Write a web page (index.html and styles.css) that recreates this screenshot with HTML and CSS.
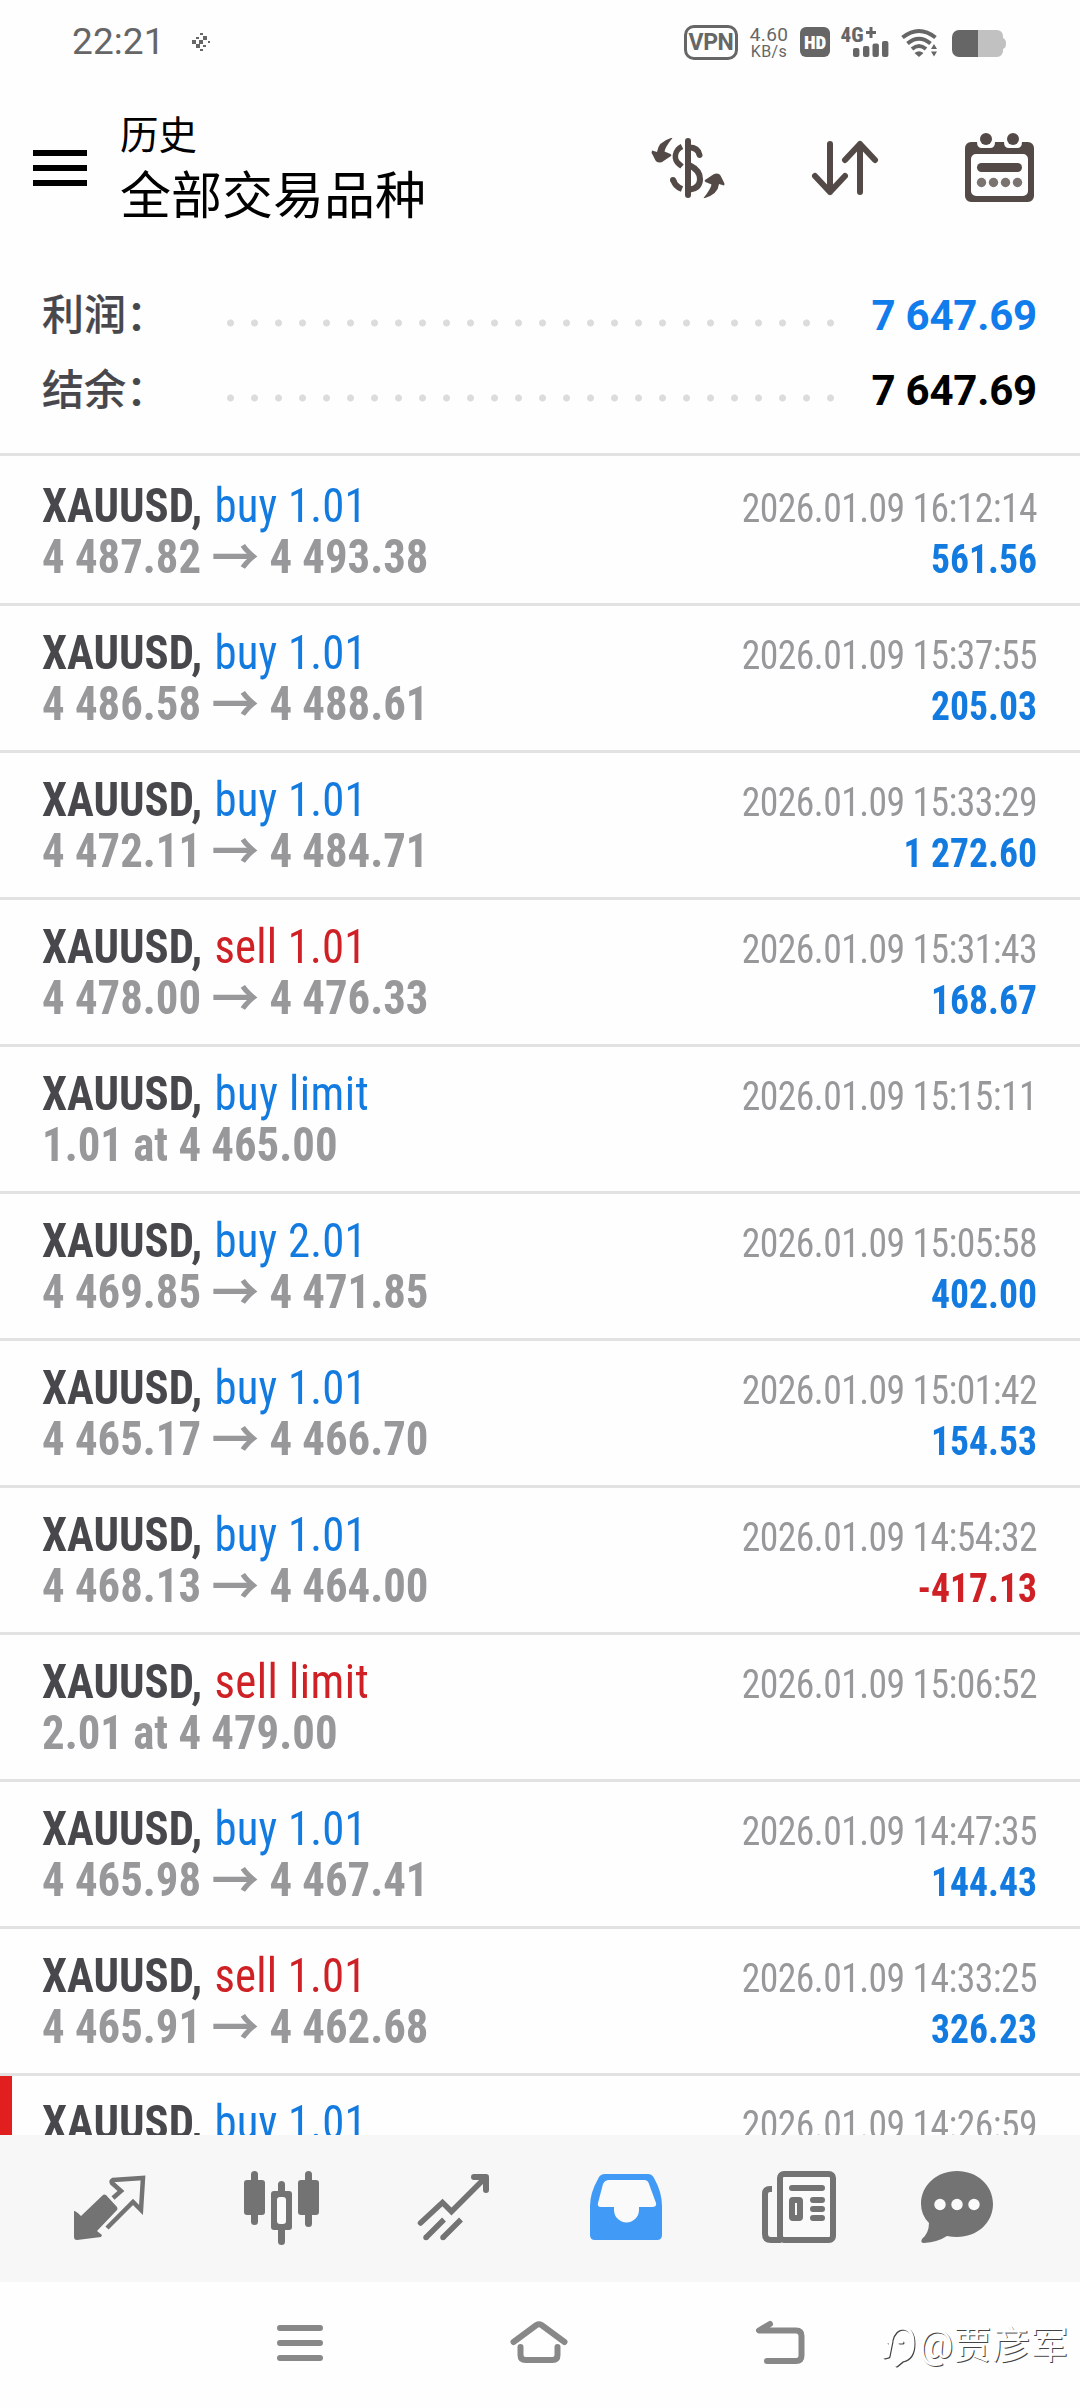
FILE: index.html
```html
<!DOCTYPE html>
<html lang="zh-CN">
<head>
<meta charset="utf-8">
<title>历史</title>
<link rel="stylesheet" href="styles.css">
</head>
<body>
<div class="screen">
  <div class="status">
    <span class="clock">22:21</span>
    <svg class="pix" width="18" height="18" viewBox="0 0 18 18"><path d="M8 0h3v2h-3zM4 4h3v2h-3zM11 3h4v4h-4zM0 7h4v4h-4zM7 7h4v4h-4zM4 11h4v4h-4zM11 12h3v2h-3zM16 8h2v2h-2zM8 16h3v2h-3z"/></svg>
    <span class="vpn">VPN</span>
    <span class="speed"><b>4.60</b><i>KB/s</i></span>
    <span class="hd">HD</span>
    <svg class="signal" width="50" height="36" viewBox="842 24 50 36"><text x="842.5" y="42" class="net">4G</text><path d="M868 31h3.500v-4h3v4h3.500v3h-3.500v4h-3v-4h-3.500z"/><rect x="855" y="48" width="6.400" height="9" rx="2"/><rect x="865" y="46" width="6.400" height="11" rx="2"/><rect x="874.500" y="43.500" width="6.400" height="13.500" rx="2"/><rect x="884" y="41" width="6.400" height="16" rx="2"/></svg>
    <svg class="wifi" width="38" height="30" viewBox="902 28 38 30"><g fill="none" stroke="#666" stroke-width="4"><path d="M904.500 37.500q16.500-13 33 0"/><path d="M909.500 43.500q11.500-9.500 23 0"/><path d="M914 49q7-6 14 0"/></g><path d="M916.500 53q4.500-3.500 9 0l-4.500 4zM933 49l3-5 3 5zM933 51.500h6l-3 5z"/></svg>
    <svg class="battery" width="54" height="28" viewBox="954 30 54 28"><path d="M980 30h19a6 6 0 0 1 6 6v2q3 1 3 5.500t-3 5.500v2a6 6 0 0 1-6 6h-19z" fill="#c1c1c1"/><path d="M980 30h-19a7 7 0 0 0-7 7v13a7 7 0 0 0 7 7h19z"/></svg>
  </div>

  <header class="header">
    <svg class="menu" width="54" height="36" viewBox="0 0 54 36"><path d="M0 0h54v6H0zM0 15h54v6H0zM0 30h54v6H0z"/></svg>
    <div class="titles"><div class="title">历史</div><div class="subtitle">全部交易品种</div></div>
    <svg class="act" width="74" height="66" viewBox="653 135 74 66" fill="none" stroke="#534a47" stroke-width="6" stroke-linecap="round">
      <path d="M690 141v54"/><path d="M684 146.500c-8 4-8.500 13-3 17.500l3 2.500" stroke-width="5.500" stroke-linecap="butt"/><path d="M691 147.500q9 0 10.500 7.500"/><path d="M692 165.500c6 3 10 6.500 10 13.500q0 9-10 10.500" stroke-linecap="butt"/><path d="M675.500 180q1 6 8.500 9" stroke-linecap="butt"/><path d="M675 180v.01"/>
      <g fill="#534a47" stroke="none"><path id="swoosh" d="M705.500 198h1.500q13-4 14-14l5 1.500q1-2-.500-4l-3-6q-1-2-4-2-2.500 0-4 1.500l-7.500 5q-1 1 .5 2l6 2.500q-1 5-8 13.500z"/><use href="#swoosh" transform="rotate(180 690 168)"/></g>
    </svg>
    <svg class="act" width="68" height="56" viewBox="812 140 68 56" fill="none" stroke="#534a47" stroke-width="6" stroke-linecap="round" stroke-linejoin="round"><path d="M831 144v48M816 176l15 16 15-16M861 192v-48M846 160l15-16 15 16"/></svg>
    <svg class="act" width="70" height="70" viewBox="966 132 70 70" fill="#534a47"><path fill-rule="evenodd" d="M972 141h6q0 6 5 6h8q5 0 5-6h9q0 6 5 6h8q5 0 5-6h6a6 6 0 0 1 6 6v48a6 6 0 0 1-6 6h-57a6 6 0 0 1-6-6v-48a6 6 0 0 1 6-6zM977 153a5 5 0 0 0-5 5v32a5 5 0 0 0 5 5h47a5 5 0 0 0 5-5v-32a5 5 0 0 0-5-5z"/><circle cx="987" cy="138" r="6"/><circle cx="1014" cy="138" r="6"/><rect x="978" y="162" width="45" height="9" rx="4.500"/><g fill="#7b7370"><circle cx="982.500" cy="181.500" r="4.700"/><circle cx="994.500" cy="181.500" r="4.700"/><circle cx="1006.500" cy="181.500" r="4.700"/><circle cx="1018.500" cy="181.500" r="4.700"/></g></svg>
  </header>

  <section class="summary">
    <div class="sum"><span class="label">利润：</span><span class="dots"></span><span class="total blue">7 647.69</span></div>
    <div class="sum"><span class="label">结余：</span><span class="dots"></span><span class="total">7 647.69</span></div>
  </section>

  <main class="list">
    <div class="row first"><div class="l"><p class="deal"><b>XAUUSD,</b> <span class="buy">buy 1.01</span></p><p class="price">4 487.82 <i>→</i> 4 493.38</p></div><div class="r"><p class="date">2026.01.09 16:12:14</p><p class="profit">561.56</p></div></div>
    <div class="row"><div class="l"><p class="deal"><b>XAUUSD,</b> <span class="buy">buy 1.01</span></p><p class="price">4 486.58 <i>→</i> 4 488.61</p></div><div class="r"><p class="date">2026.01.09 15:37:55</p><p class="profit">205.03</p></div></div>
    <div class="row"><div class="l"><p class="deal"><b>XAUUSD,</b> <span class="buy">buy 1.01</span></p><p class="price">4 472.11 <i>→</i> 4 484.71</p></div><div class="r"><p class="date">2026.01.09 15:33:29</p><p class="profit">1 272.60</p></div></div>
    <div class="row"><div class="l"><p class="deal"><b>XAUUSD,</b> <span class="sell">sell 1.01</span></p><p class="price">4 478.00 <i>→</i> 4 476.33</p></div><div class="r"><p class="date">2026.01.09 15:31:43</p><p class="profit">168.67</p></div></div>
    <div class="row"><div class="l"><p class="deal"><b>XAUUSD,</b> <span class="buy limit">buy limit</span></p><p class="price">1.01 at 4 465.00</p></div><div class="r"><p class="date">2026.01.09 15:15:11</p></div></div>
    <div class="row"><div class="l"><p class="deal"><b>XAUUSD,</b> <span class="buy">buy 2.01</span></p><p class="price">4 469.85 <i>→</i> 4 471.85</p></div><div class="r"><p class="date">2026.01.09 15:05:58</p><p class="profit">402.00</p></div></div>
    <div class="row"><div class="l"><p class="deal"><b>XAUUSD,</b> <span class="buy">buy 1.01</span></p><p class="price">4 465.17 <i>→</i> 4 466.70</p></div><div class="r"><p class="date">2026.01.09 15:01:42</p><p class="profit">154.53</p></div></div>
    <div class="row"><div class="l"><p class="deal"><b>XAUUSD,</b> <span class="buy">buy 1.01</span></p><p class="price">4 468.13 <i>→</i> 4 464.00</p></div><div class="r"><p class="date">2026.01.09 14:54:32</p><p class="profit loss">-417.13</p></div></div>
    <div class="row"><div class="l"><p class="deal"><b>XAUUSD,</b> <span class="sell limit">sell limit</span></p><p class="price">2.01 at 4 479.00</p></div><div class="r"><p class="date">2026.01.09 15:06:52</p></div></div>
    <div class="row"><div class="l"><p class="deal"><b>XAUUSD,</b> <span class="buy">buy 1.01</span></p><p class="price">4 465.98 <i>→</i> 4 467.41</p></div><div class="r"><p class="date">2026.01.09 14:47:35</p><p class="profit">144.43</p></div></div>
    <div class="row"><div class="l"><p class="deal"><b>XAUUSD,</b> <span class="sell">sell 1.01</span></p><p class="price">4 465.91 <i>→</i> 4 462.68</p></div><div class="r"><p class="date">2026.01.09 14:33:25</p><p class="profit">326.23</p></div></div>
    <div class="row flag"><div class="l"><p class="deal"><b>XAUUSD,</b> <span class="buy">buy 1.01</span></p></div><div class="r"><p class="date">2026.01.09 14:26:59</p></div></div>
  </main>

  <nav class="tabs">
    <svg width="76" height="80" viewBox="72 2168 76 80"><path d="M103 2195q1-1 3 0l11 12q1 2 0 3l-20 21 5 4-1 2-24 3q-3 0-3-3v-26q2 0 7 5z"/><path d="M113 2198l8-7-9-8q-1-2 1-3l30-2-2 32-8-8-26 26" fill="none" stroke="#737373" stroke-width="4.500"/></svg>
    <svg width="76" height="80" viewBox="244 2168 76 80"><rect x="244" y="2180" width="21" height="35" rx="3"/><rect x="251" y="2171" width="7" height="54" rx="3.500"/><rect x="298" y="2180" width="21" height="35" rx="3"/><rect x="305" y="2171" width="7" height="56" rx="3.500"/><rect x="278" y="2181" width="7" height="64" rx="3.500"/><rect x="271" y="2191" width="21" height="39" rx="3"/><rect x="277" y="2197" width="9" height="27" rx="3" fill="#fafafa"/></svg>
    <svg width="76" height="80" viewBox="416 2168 76 80" fill="none" stroke="#737373" stroke-width="5.500"><path d="M420.500 2223l22-20.500 9 9 33-33" stroke-linecap="round"/><path d="M474 2177h12v13" stroke-width="6" stroke-linecap="round" stroke-linejoin="round"/><path d="M426 2237.500l18-18M443 2237.500l18-18"/><path d="M426 2237.500v.01M443 2237.500v.01" stroke-linecap="round"/></svg>
    <svg width="76" height="80" viewBox="588 2168 76 80"><path fill="#419bf6" d="M605 2174h43q4 0 6 4 8 14 8 28v29q0 5-5 5h-62q-5 0-5-5v-29q0-13 8-27 2-5 7-5z"/><path fill="#fafafa" d="M609 2180q-4 0-6 4l-5 19q-1 4 3 4h13v3a12.500 12.500 0 0 0 25 0v-3h13q5 0 4-4l-7-19q-1-4-5-4z"/></svg>
    <svg width="76" height="80" viewBox="761 2168 76 80" fill="none" stroke="#737373" stroke-width="6"><rect x="781" y="2174" width="53" height="66" rx="4" fill="#fafafa"/><path d="M773 2189h-2q-5 0-5 5v40q0 6 6 6h10"/><path d="M793 2188h30M814 2200h9M814 2209h9M814 2218h9" stroke-linecap="round"/><rect x="793" y="2200" width="8" height="18" rx="1"/></svg>
    <svg class="last" width="76" height="80" viewBox="921 2168 76 80"><path d="M958 2171c20 0 36 14 36 33s-16 33-36 33q-5 0-10-1-9 6-23 7-4 0-2-4 7-6 7-16-8-8-8-19c0-19 16-33 36-33z"/><g fill="#fafafa"><circle cx="941" cy="2204.500" r="5.700"/><circle cx="958" cy="2204.500" r="5.700"/><circle cx="975" cy="2204.500" r="5.700"/></g></svg>
  </nav>

  <div class="system">
    <svg width="46" height="44" viewBox="277 2322 46 44"><path d="M280 2330h40M280 2345h40M280 2360h40"/></svg>
    <svg width="60" height="46" viewBox="510 2320 60 46"><path d="M514.500 2342l23-17q2.500-1.500 5 0l23 17M521.500 2347v8q0 5 5 5h27q5 0 5-5v-8"/></svg>
    <svg width="50" height="46" viewBox="755 2319 50 46"><path d="M770 2323l-11 6.500h37q5.500 0 5.500 5.500v19.500q0 5.500-5.500 5.500h-29"/></svg>
    <div class="mark"><svg width="36" height="46" viewBox="0 0 36 46"><path d="M4 34l4-1 3-15-3 1M11 17q3-12 12-12 10 1 10 15 0 15-11 17l-6 5M19 19h3"/></svg><span>@贾彦军</span></div>
  </div>
</div>
</body>
</html>
```
FILE: styles.css
```css
* { box-sizing: border-box; }
body { margin: 0; background: #fefefe; font-family: Roboto, "Noto Sans CJK SC", sans-serif; color: #000; }
svg { display: block; flex: none; }
p { margin: 0; }
.screen { width: 1080px; height: 2408px; display: flex; flex-direction: column; overflow: hidden; }

.status { height: 84px; display: flex; align-items: flex-start; color: #666; fill: #666; }
.clock { margin: 21px 0 0 72px; width: 120px; font-size: 37px; line-height: 42px; letter-spacing: .1px; }
.pix { margin-top: 33px; }
.vpn { margin: 25px 0 0 474px; width: 54px; height: 35px; border: 3px solid #666; border-radius: 10px; font-size: 23px; line-height: 30px; font-weight: 700; text-align: center; letter-spacing: -.4px; }
.speed { width: 50px; margin: 25px 0 0 6px; display: flex; flex-direction: column; align-items: center; }
.speed b { font-weight: 400; font-size: 19px; line-height: 19px; letter-spacing: .4px; }
.speed i { font-style: normal; font-size: 16px; line-height: 16px; letter-spacing: .4px; }
.hd { margin: 27px 0 0 6px; width: 30px; height: 30px; border-radius: 6px; background: #666; color: #fff; font-size: 19px; line-height: 31px; font-weight: 900; font-stretch: 80%; text-align: center; }
.signal { margin: 24px 0 0 10px; }
.net { font-size: 21px; font-weight: 800; font-stretch: 85%; }
.wifi { margin: 28px 0 0 10px; }
.battery { margin: 30px 0 0 14px; }

.header { height: 168px; display: flex; align-items: center; }
.menu { margin-left: 33px; }
.titles { margin-left: 33px; width: 531px; padding-top: 2px; }
.title { font-size: 38.5px; line-height: 52px; margin-top: 3px; }
.subtitle { font-size: 51px; line-height: 68px; margin-top: 1px; }
.act { margin-right: 86px; }
.act:last-child { margin-right: 0; }

.summary { height: 201px; padding: 26px 43px 0 42px; }
.sum { height: 75px; display: flex; align-items: center; }
.label { width: 185px; font-size: 42px; line-height: 60px; font-weight: 500; color: #48474c; -webkit-text-stroke: .2px #48474c; white-space: nowrap; }
.dots { width: 624px; height: 24px; margin-top: 25px; background: radial-gradient(circle at 3.5px 7px, #dcdcdc 3px, transparent 4px) 0 0 / 24px 24px; }
.total { margin-left: auto; font-size: 42px; line-height: 60px; font-weight: 700; letter-spacing: -.2px; white-space: nowrap; }
.total.blue { color: #117ceb; }

.list { height: 1682px; overflow: hidden; border-top: 3px solid #e2e2e2; }
.row { height: 147px; padding: 21px 43px 0 42px; display: flex; justify-content: space-between; border-bottom: 3px solid #e2e2e2; font-stretch: 75%; white-space: nowrap; }
.first { height: 150px; padding-top: 24px; }
.l { transform: scaleX(.933); transform-origin: left; }
.r { padding-top: 3px; transform: scaleX(.94); transform-origin: right; text-align: right; }
.deal, .price { font-size: 48px; line-height: 51px; color: #48474c; }
.price { font-weight: 700; color: #98989b; }
.price i { font-style: normal; font-weight: 600; font-size: 51px; line-height: 0; vertical-align: -3px; }
.buy, .sell { margin-left: 2px; letter-spacing: .2px; }
.limit { letter-spacing: .5px; }
.buy { color: #137bdf; }
.sell { color: #cf2125; }
.date { font-size: 40px; line-height: 51px; letter-spacing: -.6px; color: #98989b; }
.profit { font-size: 40px; line-height: 51px; font-weight: 700; color: #137bdf; }
.loss { color: #cf2125; }
.flag { box-shadow: inset 12px 0 #e11f1f; }

.tabs { flex: none; height: 147px; background: #f7f7f7; display: flex; align-items: center; gap: 96px; padding: 0 0 1px 72px; fill: #737373; }
.last { margin-left: -12px; }

.system { flex: 1; position: relative; display: flex; align-items: flex-start; gap: 186px; padding: 38px 0 0 277px; fill: none; stroke: #888; stroke-width: 6; stroke-linecap: round; stroke-linejoin: round; }
.mark { position: absolute; left: 880px; top: 32px; display: flex; align-items: center; font-size: 38px; letter-spacing: .4px; color: #fff; text-shadow: 1px 1px .5px #444; white-space: nowrap; }
.mark svg { stroke: #fff; stroke-width: 3; filter: drop-shadow(1px 1px 0 #444); margin: 8px 3px 0 0; }
```
